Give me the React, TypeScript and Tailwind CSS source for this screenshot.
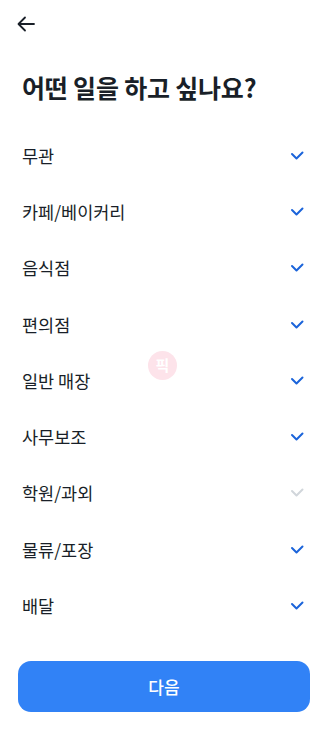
import React from "react";

const items: { label: string; on: boolean }[] = [
  { label: "무관", on: true },
  { label: "카페/베이커리", on: true },
  { label: "음식점", on: true },
  { label: "편의점", on: true },
  { label: "일반 매장", on: true },
  { label: "사무보조", on: true },
  { label: "학원/과외", on: false },
  { label: "물류/포장", on: true },
  { label: "배달", on: true },
];

function Check({ on }: { on: boolean }) {
  return (
    <svg width="14" height="14" viewBox="0 0 14 14" fill="none">
      <path
        d="M2 5 L6.5 9.5 L12.5 3.5"
        stroke={on ? "#1b64da" : "#d1d6db"}
        strokeWidth="2"
        strokeLinecap="round"
        strokeLinejoin="round"
      />
    </svg>
  );
}

export default function App() {
  return (
    <div
      className="relative w-[328px] h-[730px] bg-white flex flex-col overflow-hidden"
      style={{ fontFamily: '"Noto Sans CJK KR", "Noto Sans", sans-serif' }}
    >
      <div className="h-[48px] flex items-center pl-[16px]">
        <svg width="20" height="20" viewBox="0 0 20 20" fill="none">
          <path d="M18 10 H3 M9 3.5 L2.5 10 L9 16.5" stroke="#191f28" strokeWidth="1.8" strokeLinecap="round" strokeLinejoin="round" />
        </svg>
      </div>
      <h1 className="mt-[22px] px-[22px] text-[25px] leading-[34px] font-bold text-[#191f28] tracking-[-0.2px]">
        어떤 일을 하고 싶나요?
      </h1>
      <div className="mt-[23.5px] flex flex-col">
        {items.map((it) => (
          <div key={it.label} className="h-[56.3px] flex items-center justify-between pl-[22px] pr-[24px]">
            <span className="text-[17.5px] text-[#191f28] leading-[24px]">{it.label}</span>
            <Check on={it.on} />
          </div>
        ))}
      </div>
      <div className="mt-auto px-[18px] pb-[18px]">
        <button className="w-full h-[51px] rounded-[13px] bg-[#3182f6] text-white text-[17px] font-medium">
          다음
        </button>
      </div>
      <div className="absolute left-[148px] top-[351px] w-[29px] h-[29px] rounded-full bg-[#fde3ea] flex items-center justify-center text-white text-[15px] font-bold">
        픽
      </div>
    </div>
  );
}
